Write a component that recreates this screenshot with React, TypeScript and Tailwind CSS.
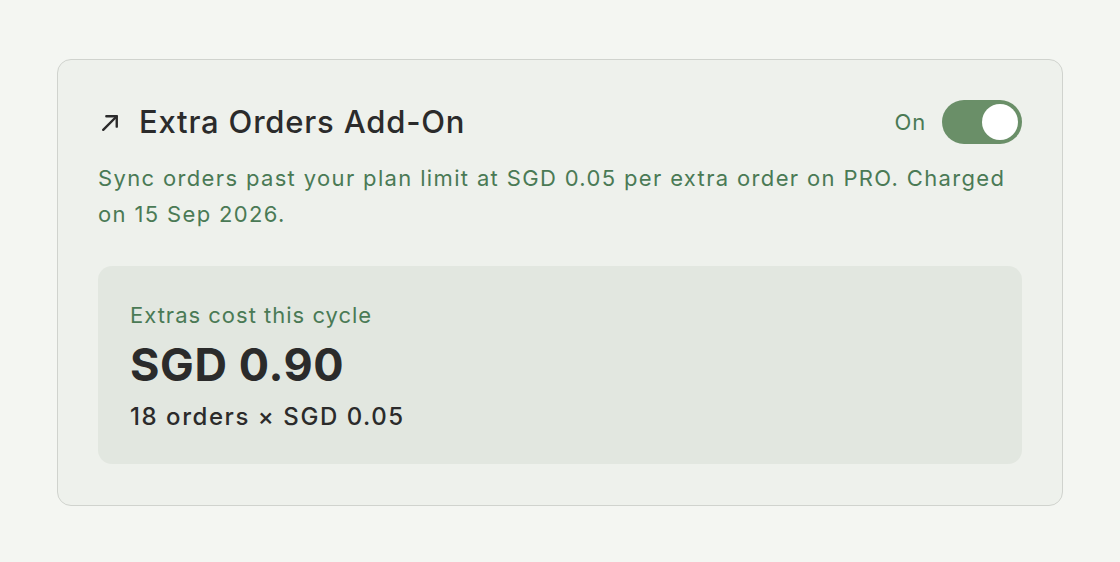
import React, { useState } from 'react';

const App: React.FC = () => {
  const [enabled, setEnabled] = useState(true);

  return (
    <div className="min-h-[562px] w-full bg-[#f4f6f2] px-[57px] pt-[59px] font-['Inter',sans-serif]">
      <div className="w-[1006px] rounded-[14px] border-[1.5px] border-[#d0d3ce] bg-[#eef1ec] px-[40px] pt-[38px] pb-[41px]">
        <div className="flex items-center justify-between">
          <div className="flex items-center gap-[16px]">
            <svg width="25" height="25" viewBox="0 0 24 24" fill="none" stroke="#2b2b2b" strokeWidth="2.3" strokeLinecap="round" strokeLinejoin="round">
              <path d="M5 19 L18 6" />
              <path d="M8 6 H18 V16" />
            </svg>
            <h2 className="text-[31px] leading-[48px] font-medium tracking-[0.8px] text-[#2b2b2b]">Extra Orders Add-On</h2>
          </div>
          <div className="flex items-center gap-[16px]">
            <span className="text-[22px] tracking-[0.8px] text-[#4a7a55]">On</span>
            <button
              onClick={() => setEnabled(!enabled)}
              className={`relative flex h-[44px] w-[80px] items-center rounded-full px-[4px] ${enabled ? 'justify-end bg-[#6a8f68]' : 'justify-start bg-[#c9cec7]'}`}
            >
              <span className="block h-[36px] w-[36px] rounded-full bg-white" />
            </button>
          </div>
        </div>

        <p className="mt-[14px] text-[22px] leading-[36px] tracking-[1.35px] text-[#4a7a55]">
          Sync orders past your plan limit at SGD 0.05 per extra order on PRO. Charged on 15 Sep 2026.
        </p>

        <div className="mt-[34px] rounded-[14px] bg-[#e2e7e0] px-[32px] pt-[33px] pb-[30px]">
          <div className="text-[22px] leading-[32px] tracking-[1px] text-[#4a7a55]">Extras cost this cycle</div>
          <div className="mt-[7px] text-[45px] leading-[54px] font-bold tracking-[0.6px] text-[#2b2b2b]">SGD 0.90</div>
          <div className="mt-[8px] text-[24px] leading-[34px] font-medium tracking-[1.55px] text-[#2b2b2b]">18 orders × SGD 0.05</div>
        </div>
      </div>
    </div>
  );
};

export default App;
